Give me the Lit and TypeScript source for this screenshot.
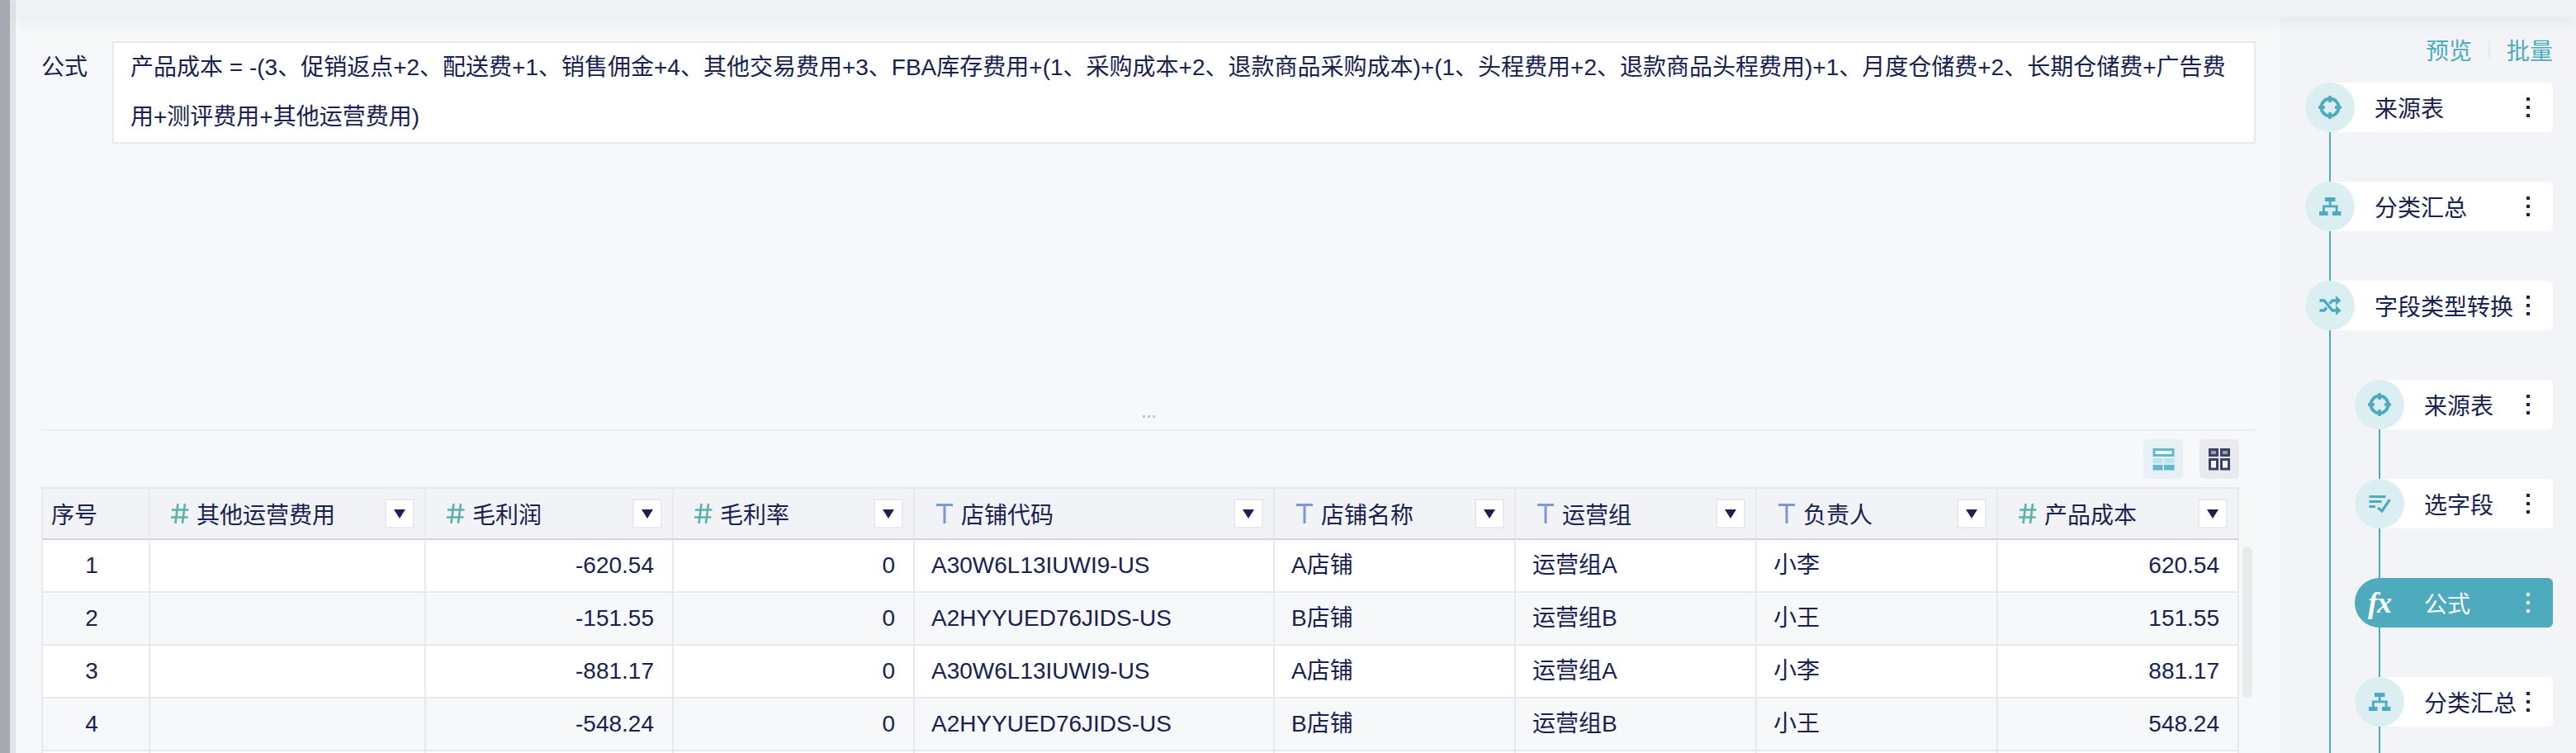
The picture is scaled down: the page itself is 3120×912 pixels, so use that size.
import { LitElement, html, css, svg, unsafeCSS } from "lit";
import { customElement } from "lit/decorators.js";

type Kind = "num" | "text";
const columns: { title: string; kind?: Kind; width: number; align?: string }[] = [
  { title: "序号", width: 130 },
  { title: "其他运营费用", kind: "num", width: 334, align: "right" },
  { title: "毛利润", kind: "num", width: 300, align: "right" },
  { title: "毛利率", kind: "num", width: 292, align: "right" },
  { title: "店铺代码", kind: "text", width: 436 },
  { title: "店铺名称", kind: "text", width: 292 },
  { title: "运营组", kind: "text", width: 292 },
  { title: "负责人", kind: "text", width: 292 },
  { title: "产品成本", kind: "num", width: 292, align: "right" },
];
const rows = [
  ["1", "", "-620.54", "0", "A30W6L13IUWI9-US", "A店铺", "运营组A", "小李", "620.54"],
  ["2", "", "-151.55", "0", "A2HYYUED76JIDS-US", "B店铺", "运营组B", "小王", "151.55"],
  ["3", "", "-881.17", "0", "A30W6L13IUWI9-US", "A店铺", "运营组A", "小李", "881.17"],
  ["4", "", "-548.24", "0", "A2HYYUED76JIDS-US", "B店铺", "运营组B", "小王", "548.24"],
  ["", "", "", "", "", "", "", "", ""],
];

const teal = "#4dabbd";
const tealCss = unsafeCSS(teal);
const icon = (body: unknown) =>
  html`<svg viewBox="0 0 60 60" width="60" height="60" fill="none" stroke=${teal}>${body}</svg>`;
const icons: Record<string, unknown> = {
  source: icon(svg`<circle cx="30" cy="30" r="10.5" stroke-width="3.8"/>
    <path d="M30 16v8M30 36v8M16 30h8M36 30h8" stroke-width="3.6"/>`),
  group: icon(svg`<g fill=${teal} stroke="none"><rect x="24" y="19" width="12.500" height="5"/>
    <rect x="28.800" y="23" width="2.800" height="7"/><rect x="21" y="28.500" width="18.500" height="2.800"/>
    <rect x="21" y="29" width="2.800" height="8"/><rect x="36.700" y="29" width="2.800" height="8"/>
    <rect x="17" y="36" width="10.500" height="5"/><rect x="33" y="36" width="10.500" height="5"/></g>`),
  shuffle: icon(svg`<path d="M17.500 24h5.500l10 12h5M17.500 36h5.500l3-3.600M29.500 27.600l3.500-3.600h5" stroke-width="3.400"/>
    <path d="M37 18l6.500 6-6.500 6zM37 30l6.500 6-6.500 6z" fill=${teal} stroke="none"/>`),
  fields: icon(svg`<path d="M17.500 21.500h20M17.500 27.500h15M17.500 33.500h7.500" stroke-width="3.200"/>
    <path d="M28 35l5 4 9.500-14" stroke-width="3.200"/>`),
};

const hash = html`<svg class="type" viewBox="0 0 22 24" width="22" height="24" fill="none" stroke="#5ab2a8" stroke-width="2.600">
  <path d="M8.500 0L5.500 24M17 0L14 24M1 7.500h20.500M0 16.500h20.500"/></svg>`;
const tee = html`<svg class="type" viewBox="0 0 22 24" width="22" height="24" fill="none" stroke="#7a97d6" stroke-width="3">
  <path d="M1 1.500h20M11 1.500V24"/></svg>`;

@customElement("app-root")
export class AppRoot extends LitElement {
  static styles = css`
    :host {
      display: block;
      width: 3120px;
      height: 912px;
      overflow: hidden;
      font-family: "Liberation Sans", "Noto Sans CJK SC", sans-serif;
      font-size: 28px;
      color: #1a2150;
    }
    * { box-sizing: border-box; }
    .page { display: flex; width: 3120px; height: 912px; background: #f7f8fa; }
    .strip { width: 12px; background: #a6a9b3; flex: none; }
    .strip2 { width: 7px; background: #e1e3e9; flex: none; }
    .body { flex: 1; display: flex; flex-direction: column; min-width: 0; }
    .topbar {
      height: 20px;
      flex: none;
      background: #f2f3f7;
      box-shadow: 0 6px 18px rgba(40, 48, 80, 0.07);
      position: relative;
      z-index: 2;
    }
    .panes { flex: 1; display: flex; min-height: 0; }
    .main { width: 2743px; flex: none; padding: 0 30px 0 31px; position: relative; }
    .editor {
      height: 502px;
      border-bottom: 2px solid #eceef2;
      display: flex;
      flex-direction: column;
      justify-content: space-between;
      padding-top: 30px;
      padding-bottom: 14px;
    }
    .formula { display: flex; }
    .label { width: 86px; flex: none; line-height: 64px; }
    .box {
      flex: 1;
      height: 124px;
      background: #fff;
      border: 2px solid #e8eaee;
      padding: 0 20px;
      line-height: 60px;
    }
    .handle { display: flex; justify-content: center; gap: 3px; }
    .handle i { width: 3px; height: 3px; background: #c4c7d0; }
    .toolbar { display: flex; justify-content: flex-end; gap: 20px; padding: 10px 20px 10px 0; }
    .tool { width: 48px; height: 48px; border-radius: 5px; display: block; }
    .tool.on { background: #e6f0f5; }
    .tool.off { background: #e9eaef; }
    .table {
      display: grid;
      width: 2662px;
      border-left: 2px solid #e8e9ee;
      border-top: 2px solid #e8e9ee;
    }
    .th {
      height: 62px;
      background: #f2f3f7;
      border-right: 2px solid #e8e9ee;
      border-bottom: 2px solid #d2d4da;
      display: flex;
      align-items: center;
      padding: 0 12px 0 25px;
      white-space: nowrap;
    }
    .th.first { padding-left: 10px; }
    .type { margin-right: 9px; flex: none; }
    .drop {
      margin-left: auto;
      width: 36px;
      height: 36px;
      background: #fff;
      border: 2px solid #e8eaee;
      display: flex;
      align-items: center;
      justify-content: center;
    }
    .drop::after {
      content: "";
      border-left: 7px solid transparent;
      border-right: 7px solid transparent;
      border-top: 11px solid #1a2150;
    }
    .td {
      height: 64px;
      line-height: 62px;
      border-right: 2px solid #e8e9ee;
      border-bottom: 2px solid #e8e9ee;
      background: #fff;
      padding: 0 20px;
      white-space: nowrap;
    }
    .td.alt { background: #f7f8fa; }
    .td.right { text-align: right; padding-right: 22px; }
    .td.center { text-align: center; padding: 0 20px 0 10px; }
    .scroll {
      position: absolute;
      left: 2697px;
      top: 642px;
      width: 12px;
      height: 183px;
      border-radius: 6px;
      background: #e9eaec;
    }
    .side { flex: 1; background: #f2f4f8; padding-left: 30px; overflow: hidden; min-width: 0; }
    .actions {
      height: 80px;
      display: flex;
      justify-content: flex-end;
      align-items: center;
      color: ${tealCss};
      padding-right: 28px;
      gap: 20px;
    }
    .actions i { width: 2px; height: 20px; background: #e6e8ec; }
    .rail { position: relative; display: flex; flex-direction: column; gap: 60px; width: 300px; }
    .rail::before {
      content: "";
      position: absolute;
      left: 29px;
      top: 0;
      bottom: 0;
      width: 2px;
      background: ${tealCss};
    }
    .rail.outer { padding-bottom: 200px; }
    .rail.inner { margin-left: 60px; width: 240px; padding-bottom: 60px; }
    .node {
      position: relative;
      height: 60px;
      display: flex;
      align-items: center;
      background: #fff;
      border-radius: 30px 6px 6px 30px;
      padding-right: 28px;
      white-space: nowrap;
      flex: none;
    }
    .circle {
      width: 60px;
      height: 60px;
      border-radius: 50%;
      background: #dbeef2;
      flex: none;
      margin-right: 24px;
    }
    .circle svg { display: block; }
    .dots { margin-left: auto; display: flex; flex-direction: column; gap: 6px; }
    .dots i { width: 4px; height: 4px; background: #1a2150; }
    .node.active { background: ${tealCss}; color: #fff; }
    .node.active .circle { background: transparent; }
    .node.active .dots i { background: #fff; }
    .fx {
      display: flex;
      align-items: center;
      justify-content: center;
      font-family: "Liberation Serif", serif;
      font-style: italic;
      font-weight: 700;
      font-size: 36px;
      letter-spacing: -1px;
      color: #fff;
    }
  `;

  private node(label: string, kind: string, active = false) {
    return html`<div class="node ${active ? "active" : ""}">
      ${kind === "fx"
        ? html`<div class="circle fx">fx</div>`
        : html`<div class="circle">${icons[kind]}</div>`}
      <span>${label}</span>
      <div class="dots"><i></i><i></i><i></i></div>
    </div>`;
  }

  render() {
    const template = columns.map((c) => `${c.width}px`).join(" ");
    return html`<div class="page">
      <div class="strip"></div>
      <div class="strip2"></div>
      <div class="body">
        <div class="topbar"></div>
        <div class="panes">
          <div class="main">
            <div class="editor">
              <div class="formula">
                <div class="label">公式</div>
                <div class="box">产品成本 = -(3、促销返点+2、配送费+1、销售佣金+4、其他交易费用+3、FBA库存费用+(1、采购成本+2、退款商品采购成本)+(1、头程费用+2、退款商品头程费用)+1、月度仓储费+2、长期仓储费+广告费用+测评费用+其他运营费用)</div>
              </div>
              <div class="handle"><i></i><i></i><i></i></div>
            </div>
            <div class="toolbar">
              <svg class="tool on" viewBox="0 0 48 48">
                <rect x="13" y="12.500" width="23" height="7" fill="#f4fafb" stroke="#5fb9cb" stroke-width="3"/>
                <rect x="11.500" y="23" width="12" height="6.500" fill="#bde4ec"/>
                <rect x="25" y="23" width="12.500" height="6.500" fill="#bde4ec"/>
                <rect x="11.500" y="31" width="12" height="6.500" fill="#5fb9cb"/>
                <rect x="25" y="31" width="12.500" height="6.500" fill="#5fb9cb"/>
              </svg>
              <svg class="tool off" viewBox="0 0 48 48">
                <g stroke="#3c4168" stroke-width="3">
                  <rect x="12.500" y="12.500" width="9" height="7" fill="#9a9fb4"/>
                  <rect x="26.500" y="12.500" width="9" height="7" fill="#9a9fb4"/>
                  <rect x="12.500" y="24.500" width="9" height="11.500" fill="#f7f8fa"/>
                  <rect x="26.500" y="24.500" width="9" height="11.500" fill="#f7f8fa"/>
                </g>
              </svg>
            </div>
            <div class="table" style="grid-template-columns:${template}">
              ${columns.map(
                (c, i) => html`<div class="th ${i === 0 ? "first" : ""}">
                  ${c.kind === "num" ? hash : c.kind === "text" ? tee : ""}
                  <span>${c.title}</span>
                  ${i === 0 ? "" : html`<div class="drop"></div>`}
                </div>`,
              )}
              ${rows.map((r, ri) =>
                r.map(
                  (v, ci) =>
                    html`<div class="td ${ri % 2 ? "alt" : ""} ${ci === 0 ? "center" : columns[ci].align === "right" ? "right" : ""}">${v}</div>`,
                ),
              )}
            </div>
            <div class="scroll"></div>
          </div>
          <div class="side">
            <div class="actions"><span>预览</span><i></i><span>批量</span></div>
            <div class="rail outer">
              ${this.node("来源表", "source")}
              ${this.node("分类汇总", "group")}
              ${this.node("字段类型转换", "shuffle")}
              <div class="rail inner">
                ${this.node("来源表", "source")}
                ${this.node("选字段", "fields")}
                ${this.node("公式", "fx", true)}
                ${this.node("分类汇总", "group")}
              </div>
            </div>
          </div>
        </div>
      </div>
    </div>`;
  }
}
